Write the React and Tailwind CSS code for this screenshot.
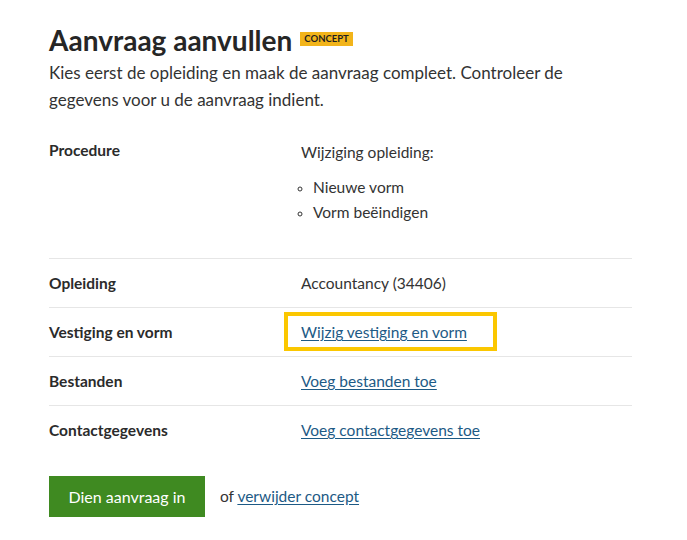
import React from "react";

const rows = [
  { label: "Opleiding", value: "Accountancy (34406)" },
  { label: "Vestiging en vorm", link: "Wijzig vestiging en vorm", highlight: true },
  { label: "Bestanden", link: "Voeg bestanden toe" },
  { label: "Contactgegevens", link: "Voeg contactgegevens toe" },
];

const App = () => {
  return (
    <div className="min-h-[540px] bg-white font-['Lato','Noto_Sans',sans-serif] text-[#2b2b2b]">
      <div className="w-[583px] ml-[49px] pt-[22px]">
        {/* Header */}
        <div className="flex items-center">
          <h1 className="text-[28px] font-bold leading-[36px] text-[#262626]">Aanvraag aanvullen</h1>
          <span className="ml-[8px] mt-[-2px] bg-[#f2b41a] px-[4px] text-[9.5px] font-bold uppercase leading-[14px] text-[#1f1f1f]">
            Concept
          </span>
        </div>
        <p className="mt-[1px] text-[17px] leading-[27px] text-[#333] w-[560px]">
          Kies eerst de opleiding en maak de aanvraag compleet. Controleer de gegevens voor u de aanvraag indient.
        </p>

        {/* Procedure */}
        <div className="mt-[27px] flex border-b border-[#e6e6e6] pb-[33px]">
          <div className="w-[252px] text-[15.5px] font-bold leading-[21px]">Procedure</div>
          <div className="text-[15.5px] leading-[21px] text-[#333]">
            <p className="mt-[2px]">Wijziging opleiding:</p>
            <ul className="mt-[12px] list-[circle] pl-[12px] marker:text-[13px]">
              <li className="leading-[25px]">Nieuwe vorm</li>
              <li className="leading-[25px]">Vorm beëindigen</li>
            </ul>
          </div>
        </div>

        {/* Detail rows */}
        {rows.map((row, i) => (
          <div
            key={row.label}
            className={`flex items-start py-[14px] leading-[20px] ${i < rows.length - 1 ? "border-b border-[#e6e6e6]" : ""}`}
          >
            <div className="w-[252px] text-[15.5px] font-bold">{row.label}</div>
            <div className="relative text-[15.5px] text-[#333]">
              {row.link ? (
                <a href="#" className="text-[#1d5a85] underline underline-offset-2">
                  {row.link}
                </a>
              ) : (
                <span>{row.value}</span>
              )}
              {row.highlight && (
                <div className="absolute left-[-17px] top-[-10px] w-[213px] h-[39px] border-4 border-[#fbc700]" />
              )}
            </div>
          </div>
        ))}

        {/* Actions */}
        <div className="mt-[22px] flex items-center">
          <button className="h-[41px] w-[156px] bg-[#3f8a21] text-[16px] text-white">Dien aanvraag in</button>
          <span className="ml-[15px] text-[15.5px] text-[#333]">
            of{" "}
            <a href="#" className="text-[#1d5a85] underline underline-offset-2">
              verwijder concept
            </a>
          </span>
        </div>
      </div>
    </div>
  );
};

export default App;
